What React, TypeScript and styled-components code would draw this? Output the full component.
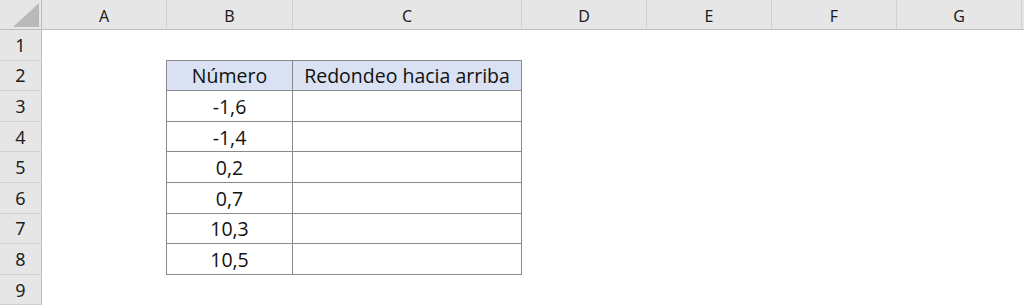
import styled, { createGlobalStyle } from "styled-components";

const GlobalStyle = createGlobalStyle`
  html, body {
    margin: 0;
    padding: 0;
    background: #ffffff;
  }
  body {
    font-family: "Open Sans", "Liberation Sans", sans-serif;
    overflow: hidden;
  }
`;

const COLS = ["A", "B", "C", "D", "E", "F", "G"];
const COL_WIDTHS = [125, 126, 229, 125, 125, 125, 125];

const rows: Record<number, [string, string]> = {
  2: ["Número", "Redondeo hacia arriba"],
  3: ["-1,6", ""],
  4: ["-1,4", ""],
  5: ["0,2", ""],
  6: ["0,7", ""],
  7: ["10,3", ""],
  8: ["10,5", ""],
};

const Sheet = styled.div`
  display: grid;
  grid-template-columns: 42px ${COL_WIDTHS.map((w) => `${w}px`).join(" ")} 1fr;
  grid-template-rows: 30px repeat(9, 30.6px);
  width: 1024px;
  height: 307px;
  overflow: hidden;
`;

const Corner = styled.div`
  position: relative;
  background: #e6e6e6;
  border-right: 1px solid #bdbdbd;
  border-bottom: 1px solid #bdbdbd;
  box-sizing: border-box;
`;

const CornerMark = styled.svg`
  position: absolute;
  right: 2px;
  bottom: 2px;
`;

const ColHeader = styled.div`
  display: flex;
  align-items: center;
  justify-content: center;
  background: #e6e6e6;
  border-right: 1px solid #d0d0d0;
  border-bottom: 1px solid #bdbdbd;
  box-sizing: border-box;
  color: #1e1e1e;
  font-family: "Noto Sans", "Open Sans", sans-serif;
  font-size: 16px;
  padding-top: 2px;
`;

const RowHeader = styled.div`
  display: flex;
  align-items: center;
  justify-content: center;
  background: #e6e6e6;
  border-right: 1px solid #bdbdbd;
  border-bottom: 1px solid #d0d0d0;
  box-sizing: border-box;
  color: #1e1e1e;
  font-family: "Noto Sans", "Open Sans", sans-serif;
  font-size: 18px;
`;

const Cell = styled.div<{ $table?: boolean; $head?: boolean; $first?: boolean; $top?: boolean }>`
  display: flex;
  align-items: center;
  justify-content: center;
  box-sizing: border-box;
  white-space: nowrap;
  color: #111;
  font-family: "Open Sans", "Liberation Sans", sans-serif;
  font-size: 19.5px;
  padding-top: 1px;
  background: ${(p) => (p.$head ? "#d9e1f2" : "#fff")};
  border-right: ${(p) => (p.$table ? "1px solid #8a8a8a" : "none")};
  border-bottom: ${(p) => (p.$table ? "1px solid #8a8a8a" : "none")};
  border-left: ${(p) => (p.$first ? "1px solid #8a8a8a" : "none")};
  border-top: ${(p) => (p.$top ? "1px solid #8a8a8a" : "none")};
  margin-left: ${(p) => (p.$first ? "-1px" : "0")};
  margin-top: ${(p) => (p.$top ? "-1px" : "0")};
`;

const Filler = styled.div<{ $header?: boolean }>`
  background: ${(p) => (p.$header ? "#e6e6e6" : "#fff")};
  border-bottom: ${(p) => (p.$header ? "1px solid #bdbdbd" : "none")};
  box-sizing: border-box;
`;

export default function App() {
  return (
    <>
      <GlobalStyle />
      <Sheet>
        <Corner>
          <CornerMark width="26" height="24" viewBox="0 0 26 24">
            <polygon points="26,0 26,24 0,24" fill="#b9b9b9" />
          </CornerMark>
        </Corner>
        {COLS.map((c) => (
          <ColHeader key={c}>{c}</ColHeader>
        ))}
        <Filler $header />
        {Array.from({ length: 9 }, (_, i) => i + 1).map((r) => {
          const data = rows[r];
          return [
            <RowHeader key={`h${r}`}>{r}</RowHeader>,
            ...COLS.map((c, ci) => {
              const inTable = !!data && (ci === 1 || ci === 2);
              const text = inTable ? data[ci - 1] : "";
              return (
                <Cell
                  key={`${c}${r}`}
                  $table={inTable}
                  $head={inTable && r === 2}
                  $first={inTable && ci === 1}
                  $top={inTable && r === 2}
                >
                  {text}
                </Cell>
              );
            }),
            <Filler key={`f${r}`} />,
          ];
        })}
      </Sheet>
    </>
  );
}
